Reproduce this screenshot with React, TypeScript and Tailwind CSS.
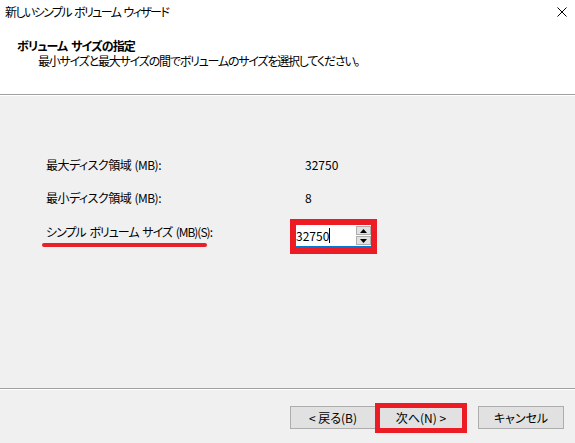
import React from 'react';

const font = { fontFamily: '"Noto Sans CJK JP", "Noto Sans", sans-serif' };

const WinButton: React.FC<{ label: string; className?: string }> = ({ label, className = '' }) => (
    <button className={`h-[23px] w-[86px] bg-[#e1e1e1] border border-[#adadad] text-[12px] leading-none text-black flex items-center justify-center ${className}`}>
        {label}
    </button>
);

export default function App() {
    return (
        <div className="w-[575px] h-[443px] bg-[#f0f0f0] flex flex-col text-black overflow-hidden [font-feature-settings:'palt']" style={font}>
            {/* header */}
            <div className="h-[95px] bg-white border-b border-[#a0a0a0] relative shrink-0">
                <div className="h-[24px] flex items-center pl-[5px] text-[12px] tracking-[-1.6px] [word-spacing:2px]">新しいシンプル ボリューム ウィザード</div>
                <svg className="absolute right-[8px] top-[7px]" width="10" height="10" viewBox="0 0 10 10">
                    <path d="M0.5 0.5 L9.5 9.5 M9.5 0.5 L0.5 9.5" stroke="#000" strokeWidth="1" />
                </svg>
                <div className="mt-[14px] pl-[17px] text-[12px] leading-[15px] font-bold tracking-[-0.9px] [word-spacing:2px]">ボリューム サイズの指定</div>
                <div className="pl-[38px] text-[12px] leading-[15px] tracking-[-1.2px]">最小サイズと最大サイズの間でボリュームのサイズを選択してください。</div>
            </div>
            <div className="h-px bg-white shrink-0" />

            {/* body */}
            <div className="flex-1 flex flex-col pl-[46px] pt-[59px] text-[12px]">
                <div className="flex h-[20px] items-center">
                    <span className="w-[259px] tracking-[-0.5px] [word-spacing:1px]">最大ディスク領域 (MB):</span>
                    <span>32750</span>
                </div>
                <div className="flex h-[20px] items-center mt-[13px]">
                    <span className="w-[259px] tracking-[-0.5px] [word-spacing:1px]">最小ディスク領域 (MB):</span>
                    <span>8</span>
                </div>
                <div className="flex mt-[11px]">
                    <div className="w-[244px] relative">
                        <div className="mt-[3px] leading-[20px] tracking-[-1px] [word-spacing:2px]">シンプル ボリューム サイズ (MB)(S):</div>
                        <div className="absolute left-[-4px] top-[24px] w-[165px] h-[4px] rounded-full bg-[#e8202a]" />
                    </div>
                    <div className="border-[6px] border-[#ed1c24] w-[87px] h-[35px]">
                        <div className="h-full bg-white border-b-2 border-[#0078d7] flex items-stretch">
                            <div className="flex-1 flex items-center text-[12px] leading-none">
                                32750<span className="inline-block w-px h-[15px] bg-black" />
                            </div>
                            <div className="w-[15px] flex flex-col gap-px py-px">
                                <div className="flex-1 bg-[#e1e1e1] border border-[#adadad] flex items-center justify-center">
                                    <svg width="7" height="4" viewBox="0 0 7 4"><path d="M3.5 0 L7 4 L0 4 Z" fill="#000" /></svg>
                                </div>
                                <div className="flex-1 bg-[#e1e1e1] border border-[#adadad] flex items-center justify-center">
                                    <svg width="7" height="4" viewBox="0 0 7 4"><path d="M0 0 L7 0 L3.5 4 Z" fill="#000" /></svg>
                                </div>
                            </div>
                        </div>
                    </div>
                </div>
            </div>

            {/* footer */}
            <div className="h-px bg-[#a0a0a0] shrink-0" />
            <div className="h-px bg-white shrink-0" />
            <div className="h-[53px] shrink-0 flex items-start pt-[16px] pl-[290px]">
                <WinButton label="< 戻る(B)" />
                <div className="relative">
                    <WinButton label="次へ(N) >" className="ml-[2px]" />
                    <div className="absolute left-[-1px] top-[-3px] w-[92px] h-[30px] border-[5px] border-[#ed1c24]" />
                </div>
                <WinButton label="キャンセル" className="ml-[14px]" />
            </div>
        </div>
    );
}
